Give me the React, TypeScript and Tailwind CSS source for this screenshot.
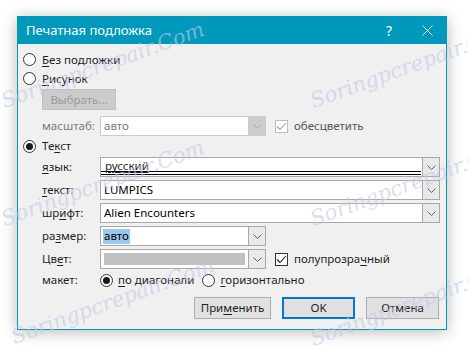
import React from 'react';

const font = { fontFamily: '"Noto Sans", "Open Sans", sans-serif' };

const Chevron: React.FC<{ color?: string }> = ({ color = '#606060' }) => (
  <svg width="9" height="5" viewBox="0 0 9 5" fill="none">
    <path d="M0.5 0.5 L4.5 4.5 L8.5 0.5" stroke={color} strokeWidth="1" />
  </svg>
);

const Radio: React.FC<{ checked?: boolean }> = ({ checked }) => (
  <span className="w-[13px] h-[13px] rounded-full border border-[#333333] bg-white flex items-center justify-center shrink-0">
    {checked && <span className="w-[7px] h-[7px] rounded-full bg-[#1a1a1a]" />}
  </span>
);

const Check: React.FC<{ disabled?: boolean }> = ({ disabled }) => (
  <span
    className={`w-[13px] h-[13px] border bg-white flex items-center justify-center shrink-0 ${
      disabled ? 'border-[#bcbcbc]' : 'border-[#333333]'
    }`}
  >
    <svg width="11" height="9" viewBox="0 0 11 9" fill="none">
      <path d="M1 4.5 L4 7.5 L10 1" stroke={disabled ? '#a0a0a0' : '#222'} strokeWidth="1.1" />
    </svg>
  </span>
);

const U: React.FC<{ children: React.ReactNode }> = ({ children }) => <span className="underline underline-offset-2">{children}</span>;

const Label: React.FC<{ children: React.ReactNode; disabled?: boolean }> = ({ children, disabled }) => (
  <div className={`w-[58px] ml-[19px] shrink-0 ${disabled ? 'text-[#7a7a7a]' : 'text-[#1e1e1e]'}`}>{children}</div>
);

const Combo: React.FC<{ w: string; children?: React.ReactNode; disabled?: boolean }> = ({ w, children, disabled }) => (
  <div className={`${w} h-[20px] flex border bg-white ${disabled ? 'border-[#cccccc]' : 'border-[#a9a9a9]'}`}>
    <div className="flex-1 flex items-center min-w-0 relative">{children}</div>
    <div
      className={`w-[17px] flex items-center justify-center border-l ${
        disabled ? 'bg-[#cccccc] border-[#cccccc]' : 'bg-[#e9e9e9] border-[#a9a9a9]'
      }`}
    >
      <Chevron color={disabled ? '#a8a8a8' : '#606060'} />
    </div>
  </div>
);

// faint site watermark baked into the screenshot
const Watermark: React.FC<{ x: number; y: number }> = ({ x, y }) => (
  <span
    aria-hidden="true"
    className="absolute pointer-events-none select-none whitespace-nowrap italic text-[21px] text-[#c3c9e6] opacity-60 -rotate-[20deg]"
    style={{ left: x, top: y, fontFamily: '"DejaVu Serif", serif' }}
  >
    Soringpcrepair.Com
  </span>
);

const App: React.FC = () => {
  return (
    <div className="w-[468px] h-[352px] bg-white relative overflow-hidden" style={font}>
      <div className="ml-[17px] mt-[16px] w-[430px] h-[314px] border border-[#0099bc] bg-[#f0f0f0] flex flex-col shadow-[0_2px_14px_rgba(0,0,0,0.28)]">
        <div className="h-[27px] bg-[#0099bc] flex items-center text-white shrink-0">
          <span className="ml-[8px] text-[13px] leading-none">Печатная подложка</span>
          <span className="ml-auto mr-[30px] text-[14px] leading-none">?</span>
          <svg className="mr-[13px]" width="11" height="11" viewBox="0 0 11 11">
            <path d="M0.5 0.5 L10.5 10.5 M10.5 0.5 L0.5 10.5" stroke="#ffffff" strokeWidth="1" />
          </svg>
        </div>

        <div className="flex flex-col text-[11.5px] leading-none pl-[5px] pr-[5px] text-[#1e1e1e]">
          <div className="mt-[6px] h-[19px] flex items-center gap-[6px]">
            <Radio />
            <span><U>Б</U>ез подложки</span>
          </div>
          <div className="h-[19px] flex items-center gap-[6px]">
            <Radio />
            <span><U>Р</U>исунок</span>
          </div>
          <div className="mt-[1px] ml-[19px] w-[74px] h-[21px] bg-[#cccccc] border border-[#bfbfbf] flex items-center justify-center text-[#9a9a9a]">
            Выбрать...
          </div>

          <div className="mt-[6px] h-[20px] flex items-center">
            <Label disabled>масштаб:</Label>
            <Combo w="w-[166px]" disabled>
              <span className="ml-[3px] text-[#7a7a7a]">авто</span>
            </Combo>
            <div className="ml-[9px] flex items-center gap-[6px]">
              <Check disabled />
              <span className="text-[#555555]">обесцветить</span>
            </div>
          </div>

          <div className="h-[20px] flex items-center gap-[6px]">
            <Radio checked />
            <span>Те<U>к</U>ст</span>
          </div>

          <div className="mt-[1px] h-[20px] flex items-center">
            <Label><U>я</U>зык:</Label>
            <Combo w="w-[340px]">
              <span className="ml-[4px] mb-[3px] underline underline-offset-2">русский</span>
              <span className="absolute left-0 right-[1px] bottom-[1px] h-[4px] border-t border-b border-black" />
            </Combo>
          </div>
          <div className="mt-[3px] h-[20px] flex items-center">
            <Label><U>т</U>екст:</Label>
            <Combo w="w-[340px]">
              <span className="ml-[3px] text-black">LUMPICS</span>
            </Combo>
          </div>
          <div className="mt-[3px] h-[20px] flex items-center">
            <Label>шр<U>и</U>фт:</Label>
            <Combo w="w-[340px]">
              <span className="ml-[3px] text-black">Alien Encounters</span>
            </Combo>
          </div>
          <div className="mt-[3px] h-[20px] flex items-center">
            <Label>ра<U>з</U>мер:</Label>
            <Combo w="w-[166px]">
              <span className="ml-[2px] px-[1px] h-[15px] flex items-center bg-[#99c9ef] text-black">авто</span>
            </Combo>
          </div>
          <div className="mt-[3px] h-[20px] flex items-center">
            <Label>Цв<U>е</U>т:</Label>
            <Combo w="w-[166px]">
              <span className="ml-[3px] mr-[3px] h-[12px] flex-1 bg-[#c0c0c0]" />
            </Combo>
            <div className="ml-[9px] flex items-center gap-[6px]">
              <Check />
              <span>полупрозра<U>ч</U>ный</span>
            </div>
          </div>

          <div className="mt-[2px] h-[18px] flex items-center">
            <Label>макет:</Label>
            <div className="flex items-center gap-[5px]">
              <Radio checked />
              <span><U>п</U>о диагонали</span>
            </div>
            <div className="ml-[8px] flex items-center gap-[5px]">
              <Radio />
              <span><U>г</U>оризонтально</span>
            </div>
          </div>

          <div className="mt-[8px] flex justify-end gap-[11px] pr-[2px]">
            <div className="w-[77px] h-[22px] bg-[#e1e1e1] border border-[#adadad] flex items-center justify-center">
              При<U>м</U>енить
            </div>
            <div className="w-[73px] h-[22px] bg-[#e1e1e1] border-2 border-[#0078d7] flex items-center justify-center">
              OK
            </div>
            <div className="w-[73px] h-[22px] bg-[#e1e1e1] border border-[#adadad] flex items-center justify-center">
              Отмена
            </div>
          </div>
        </div>
      </div>

      <Watermark x={-4} y={50} />
      <Watermark x={305} y={50} />
      <Watermark x={-4} y={168} />
      <Watermark x={305} y={168} />
      <Watermark x={6} y={286} />
      <Watermark x={305} y={288} />
    </div>
  );
};

export default App;
